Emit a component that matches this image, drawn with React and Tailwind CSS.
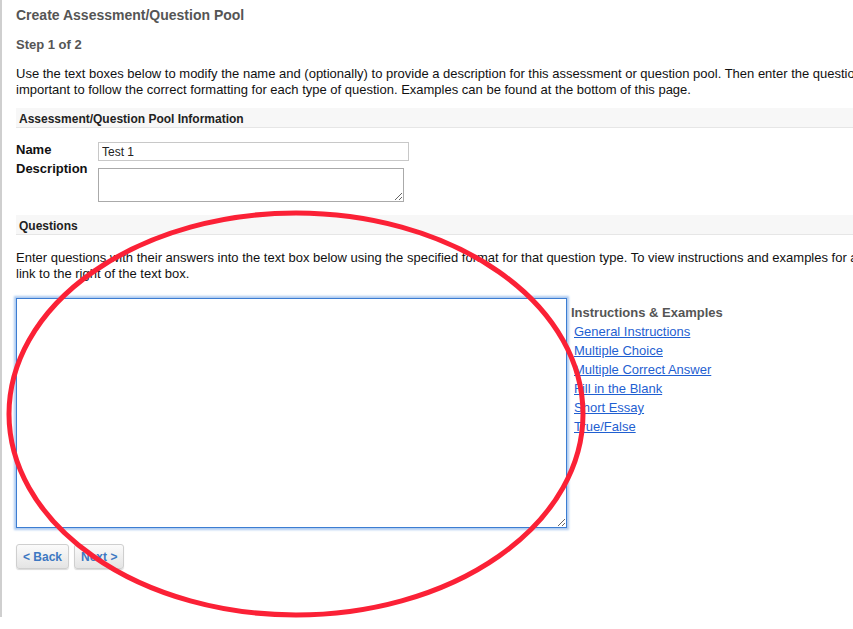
import React from 'react';

const links = [
  'General Instructions',
  'Multiple Choice',
  'Multiple Correct Answer',
  'Fill in the Blank',
  'Short Essay',
  'True/False',
];

const SectionBar = ({ children }) => (
  <div className="h-[20px] bg-[#f7f7f7] border-b border-[#e6e6e6] pl-[3px] pt-[3px] flex items-center text-[12px] font-bold text-[#222]">
    {children}
  </div>
);

export default function App() {
  return (
    <div
      className="relative w-[853px] h-[629px] overflow-hidden bg-white text-[13px] text-[#111]"
      style={{ fontFamily: '"Liberation Sans", Arial, Helvetica, sans-serif' }}
    >
      {/* page frame with the grey left rule */}
      <div className="w-[940px] h-[617px] border-l-2 border-[#cfcfcf] pl-[14px] pt-[6px]">
        <h1 className="text-[14px] font-bold text-[#555] leading-[18px]">Create Assessment/Question Pool</h1>
        <h2 className="mt-[13px] text-[13px] font-bold text-[#555] leading-[16px]">Step 1 of 2</h2>

        <p className="mt-[13px] leading-[15.5px] whitespace-nowrap">
          Use the text boxes below to modify the name and (optionally) to provide a description for this assessment or question pool. Then enter the questions and answers. It is
          <br />
          important to follow the correct formatting for each type of question. Examples can be found at the bottom of this page.
        </p>

        {/* Pool information */}
        <div className="mt-[11px]">
          <SectionBar>Assessment/Question Pool Information</SectionBar>
        </div>

        <div className="mt-[14px] flex">
          <div className="w-[82px] flex flex-col font-bold text-[13px] leading-[19px]">
            <span className="mt-[-2px]">Name</span>
            <span>Description</span>
          </div>
          <div className="flex flex-col">
            <input
              type="text"
              defaultValue="Test 1"
              className="w-[311px] h-[19px] border border-[#c8c8c8] px-[3px] text-[12px] text-[#222] outline-none"
              style={{ fontFamily: 'inherit' }}
            />
            <textarea
              className="mt-[7px] w-[306px] h-[34px] border border-[#aaa] outline-none resize"
            />
          </div>
        </div>

        {/* Questions */}
        <div className="mt-[13px]">
          <SectionBar>Questions</SectionBar>
        </div>

        <p className="mt-[15px] leading-[16px] whitespace-nowrap">
          Enter questions with their answers into the text box below using the specified format for that question type. To view instructions and examples for a type, click the
          <br />
          link to the right of the text box.
        </p>

        <div className="mt-[16px] flex items-start">
          <textarea
            className="w-[551px] h-[230px] border border-[#3c7dd2] shadow-[0_0_2px_2px_#aecbf0] outline-none resize"
          />
          <div className="ml-[4px] mt-[7px]">
            <div className="font-bold text-[#555] leading-[16px]">Instructions &amp; Examples</div>
            <ul className="mt-[1px] ml-[3px]">
              {links.map((l) => (
                <li key={l} className="leading-[19px]">
                  <a href="#" className="text-[#1f5fd1] underline">{l}</a>
                </li>
              ))}
            </ul>
          </div>
        </div>

        <div className="mt-[16px] flex gap-[5px]">
          <button className="h-[25px] px-[6px] rounded-[3px] border border-[#cfcfcf] bg-gradient-to-b from-[#fbfbfb] to-[#e4e4e4] shadow-[0_1px_1px_rgba(0,0,0,0.15)] text-[12px] font-bold text-[#3d78c2]">
            &lt; Back
          </button>
          <button className="h-[25px] px-[6px] rounded-[3px] border border-[#cfcfcf] bg-gradient-to-b from-[#fbfbfb] to-[#e4e4e4] shadow-[0_1px_1px_rgba(0,0,0,0.15)] text-[12px] font-bold text-[#3d78c2]">
            Next &gt;
          </button>
        </div>
      </div>

      {/* red hand-drawn annotation ellipse lying over the page */}
      <svg className="absolute inset-0 pointer-events-none" width="853" height="629" viewBox="0 0 853 629">
        <ellipse cx="296" cy="414" rx="287" ry="201" fill="none" stroke="#fb2136" strokeWidth="5" />
      </svg>
    </div>
  );
}
